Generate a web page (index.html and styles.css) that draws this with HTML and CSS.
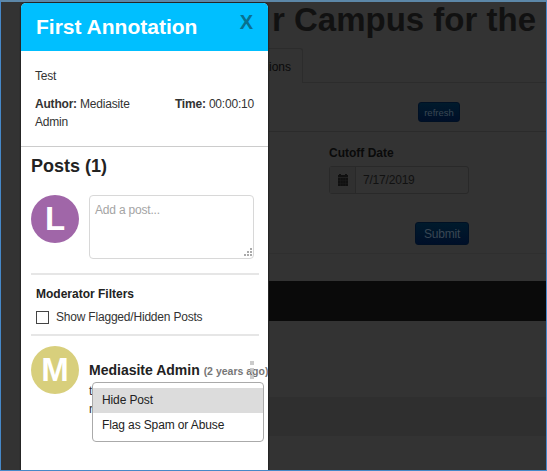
FILE: index.html
```html
<!DOCTYPE html>
<html lang="en">
<head>
    <meta charset="UTF-8">
    <meta name="viewport" content="width=device-width, initial-scale=1.0">
    <title>First Annotation</title>
    <link rel="stylesheet" href="styles.css">
</head>
<body>
    <div class="frame">
        <div class="page">
            <h1 class="page-title">r Campus for the</h1>
            <div class="tabs">
                <div class="tab">ions</div>
                <div class="tab-line"></div>
            </div>
            <div class="refresh-row">
                <button class="btn btn-small">refresh</button>
            </div>
            <form class="cutoff">
                <label class="cutoff-label" for="cutoff">Cutoff Date</label>
                <div class="date-group">
                    <span class="date-icon">
                        <svg width="12" height="12" viewBox="0 0 12 12" fill="#101010">
                            <path d="M1 1h1V0h2v1h4V0h2v1h1v2H1zM1 3.500h10V12H1z"/>
                            <path d="M1 6.500h10M1 9.500h10M3.500 4v8M6 4v8M8.500 4v8" stroke="#222" stroke-width=".3"/>
                        </svg>
                    </span>
                    <input id="cutoff" class="date-input" type="text" value="7/17/2019">
                </div>
                <button class="btn" type="button">Submit</button>
            </form>
            <div class="table-head"></div>
            <div class="table-row"></div>
            <div class="table-row striped"></div>
        </div>

        <aside class="panel">
            <header class="panel-header">
                <h2>First Annotation</h2>
                <span class="close">X</span>
            </header>

            <section class="info">
                <p class="info-text">Test</p>
                <div class="meta">
                    <p class="author"><b>Author:</b> <span>Mediasite</span><br><span>Admin</span></p>
                    <p><b>Time:</b> 00:00:10</p>
                </div>
            </section>

            <section class="posts">
                <h3>Posts (1)</h3>
                <div class="new-post">
                    <span class="avatar purple">L</span>
                    <div class="post-box">
                        <textarea placeholder="Add a post..."></textarea>
                        <svg class="grip" width="10" height="10" viewBox="0 0 10 10" fill="#aaa">
                            <path d="M7 0h2v2H7zM4 3h2v2H4zM7 3h2v2H7zM1 6h2v2H1zM4 6h2v2H4zM7 6h2v2H7z"/>
                        </svg>
                    </div>
                </div>

                <div class="filters">
                    <h4>Moderator Filters</h4>
                    <label class="check"><input type="checkbox">Show Flagged/Hidden Posts</label>
                </div>

                <article class="post">
                    <span class="avatar yellow">M</span>
                    <div class="post-body">
                        <div class="post-head"><b>Mediasite Admin</b> <span class="age">(2 years ago)</span></div>
                        <p class="post-text">t<br>r</p>
                        <div class="dots"><i></i><i></i><i></i></div>
                        <ul class="menu">
                            <li class="active">Hide Post</li>
                            <li>Flag as Spam or Abuse</li>
                        </ul>
                    </div>
                </article>
            </section>
        </aside>
    </div>
</body>
</html>
```
FILE: styles.css
```css
* {
    box-sizing: border-box;
}
body {
    margin: 0;
    font-family: "Liberation Sans", Arial, sans-serif;
    font-size: 12px;
    color: #333;
}
h1, h2, h3, h4, p, ul {
    margin: 0;
    padding: 0;
}

.frame {
    position: relative;
    height: 471px;
    overflow: hidden;
    background-color: #333;
    border: 1px solid #4688c8;
    border-top: 2px solid #5c87a8;
}

/* dimmed page behind the panel */
.page {
    padding-left: 268px;
    color: #0a0a0a;
}
.page-title {
    height: 46px;
    padding-left: 3px;
    font-size: 33px;
    line-height: 36px;
    white-space: nowrap;
    color: #111;
}
.tabs {
    display: flex;
    height: 35px;
}
.tab {
    width: 34px;
    padding-top: 11px;
    font-size: 12px;
    border: 1px solid #2c2c2c;
    border-width: 1px 1px 0 0;
    border-radius: 0 3px 0 0;
}
.tab-line {
    flex: 1;
    border-bottom: 1px solid #2c2c2c;
}
.refresh-row {
    height: 49px;
    padding: 19px 0 0 149px;
    border-bottom: 1px solid #2b2b2b;
}
.btn {
    display: block;
    width: 54px;
    height: 23px;
    padding: 0;
    font: 12px "Liberation Sans", Arial, sans-serif;
    letter-spacing: -0.2px;
    color: #3a4754;
    background: linear-gradient(#001a2c, #000f28);
    border: 1px solid #001024;
    border-radius: 3px;
}
.btn-small {
    width: 42px;
    height: 20px;
    font-size: 9.500px;
    letter-spacing: 0;
}
.cutoff {
    height: 122px;
    padding: 14px 0 0 60px;
    border-bottom: 1px solid #2f2f2f;
}
.cutoff-label {
    display: block;
    font-weight: bold;
    line-height: 14px;
}
.date-group {
    display: flex;
    width: 140px;
    height: 28px;
    margin: 6px 0 28px;
    border: 1px solid #292929;
    border-radius: 3px;
}
.date-icon {
    display: flex;
    align-items: center;
    justify-content: center;
    width: 26px;
    background-color: #303030;
    border-right: 1px solid #292929;
}
.date-input {
    width: 110px;
    padding: 0 7px;
    font: 12px "Liberation Sans", Arial, sans-serif;
    letter-spacing: -0.2px;
    color: #111;
    background: none;
    border: none;
}
.cutoff .btn {
    margin-left: 86px;
}
.table-head {
    height: 40px;
    margin-top: 27px;
    background-color: #0a0a0a;
}
.table-row {
    height: 76px;
}
.table-row.striped {
    height: 39px;
    background-color: #2f2f2f;
}

/* annotation panel */
.panel {
    position: absolute;
    top: 1px;
    left: 20px;
    width: 247px;
    height: 470px;
    letter-spacing: -0.2px;
    background-color: #fff;
    border-radius: 5px 5px 0 0;
    box-shadow: 0 0 2px #000;
}
.panel-header {
    display: flex;
    justify-content: space-between;
    height: 48px;
    padding: 0 15px;
    letter-spacing: 0;
    color: #fff;
    background-color: #00bfff;
    border-radius: 5px 5px 0 0;
}
.panel-header h2 {
    font-size: 21px;
    line-height: 47px;
}
.close {
    font-size: 20px;
    font-weight: bold;
    line-height: 39px;
    color: #08718f;
}

.info {
    height: 96px;
    padding: 16px 14px 0;
    line-height: 18px;
    border-bottom: 1px solid #ccc;
}
.meta {
    display: flex;
    justify-content: space-between;
    margin-top: 10px;
}
.author {
    width: 110px;
}

.posts {
    padding: 9px 10px 0;
}
.posts h3 {
    font-size: 18px;
    line-height: 20px;
    letter-spacing: 0;
    color: #222;
}
.new-post {
    display: flex;
    gap: 10px;
    height: 78px;
    margin-top: 19px;
}
.avatar {
    flex: none;
    width: 48px;
    height: 48px;
    font-size: 33px;
    font-weight: bold;
    line-height: 48px;
    letter-spacing: 0;
    text-align: center;
    color: #fff;
    border-radius: 50%;
}
.purple {
    background-color: #a066a8;
}
.yellow {
    background-color: #d8cf7c;
}
.post-box {
    position: relative;
    width: 165px;
    height: 64px;
}
.post-box textarea {
    display: block;
    width: 100%;
    height: 100%;
    padding: 7px 5px;
    font: 12px "Liberation Sans", Arial, sans-serif;
    letter-spacing: -0.2px;
    border: 1px solid #d8d8d8;
    border-radius: 4px;
    resize: none;
}
.post-box textarea::placeholder {
    color: #a4a4a4;
}
.grip {
    position: absolute;
    right: 1px;
    bottom: 1px;
}

.filters {
    height: 63px;
    width: 228px;
    padding: 11px 5px 0;
    border-top: 2px solid #e6e6e6;
    border-bottom: 2px solid #e6e6e6;
}
.filters h4 {
    font-size: 12px;
    line-height: 16px;
    letter-spacing: 0;
    color: #222;
}
.check {
    display: flex;
    align-items: center;
    gap: 7px;
    margin-top: 8px;
    line-height: 14px;
}
.check input {
    appearance: none;
    width: 13px;
    height: 13px;
    margin: 0;
    border: 1px solid #444;
}

.post {
    display: flex;
    gap: 10px;
    padding-top: 10px;
}
.post-body {
    position: relative;
    padding-top: 15px;
    white-space: nowrap;
}
.post-head {
    font-size: 14px;
    line-height: 18px;
    letter-spacing: 0;
    color: #222;
}
.age {
    font-size: 10.500px;
    font-weight: bold;
    color: #777;
}
.post-text {
    line-height: 18px;
    padding-top: 2px;
}
.dots {
    position: absolute;
    top: 15px;
    left: 161px;
    display: grid;
    gap: 3px;
}
.dots i {
    width: 4px;
    height: 4px;
    background-color: rgba(190, 190, 190, .8);
}
.menu {
    position: absolute;
    top: 36px;
    left: 3px;
    width: 172px;
    height: 60px;
    padding-top: 5px;
    list-style: none;
    line-height: 25px;
    letter-spacing: -0.12px;
    color: #222;
    background-color: #fff;
    border: 1px solid #aaa;
    border-radius: 4px;
}
.menu li {
    padding-left: 9px;
}
.menu .active {
    background-color: #dcdcdc;
}
```
